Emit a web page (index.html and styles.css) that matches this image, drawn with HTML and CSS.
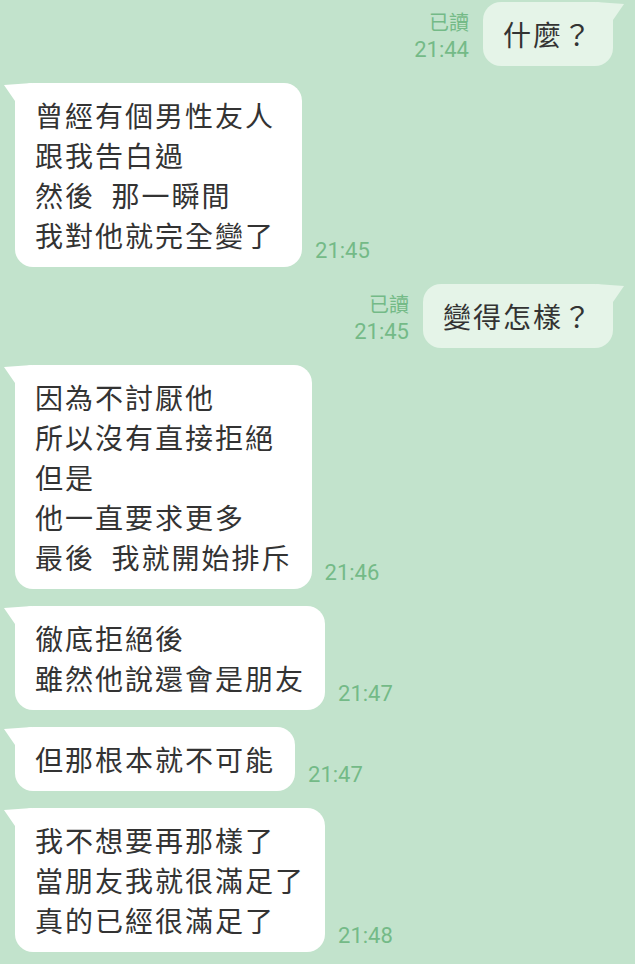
FILE: index.html
```html
<!DOCTYPE html>
<html lang="zh-Hant">
<head>
<meta charset="utf-8">
<title>Chat</title>
<link rel="stylesheet" href="styles.css">
</head>
<body>
<div class="chat">
  <div class="row sent">
    <div class="meta"><span class="read">已讀</span><span class="time">21:44</span></div>
    <div class="bubble">什麼？</div>
  </div>
  <div class="row recv">
    <div class="bubble wide">曾經有個男性友人<br>跟我告白過<br>然後  那一瞬間<br>我對他就完全變了</div>
    <span class="time">21:45</span>
  </div>
  <div class="row sent">
    <div class="meta"><span class="read">已讀</span><span class="time">21:45</span></div>
    <div class="bubble">變得怎樣？</div>
  </div>
  <div class="row recv">
    <div class="bubble">因為不討厭他<br>所以沒有直接拒絕<br>但是<br>他一直要求更多<br>最後  我就開始排斥</div>
    <span class="time">21:46</span>
  </div>
  <div class="row recv">
    <div class="bubble">徹底拒絕後<br>雖然他說還會是朋友</div>
    <span class="time">21:47</span>
  </div>
  <div class="row recv">
    <div class="bubble">但那根本就不可能</div>
    <span class="time">21:47</span>
  </div>
  <div class="row recv">
    <div class="bubble">我不想要再那樣了<br>當朋友我就很滿足了<br>真的已經很滿足了</div>
    <span class="time">21:48</span>
  </div>
</div>
</body>
</html>
```
FILE: styles.css
```css
html, body {
  margin: 0;
  padding: 0;
  background: #c2e3cc;
}

.chat {
  display: flex;
  flex-direction: column;
  gap: 17px;
  padding-top: 2px;
}

.row {
  display: flex;
  align-items: flex-end;
}

.row.sent {
  justify-content: flex-end;
  padding-right: 22px;
  gap: 14px;
}

.row.recv {
  justify-content: flex-start;
  padding-left: 15px;
  gap: 13px;
}

.bubble {
  position: relative;
  background: #ffffff;
  color: #333333;
  border-radius: 18px;
  padding: 12px 20px;
  font-family: "Noto Sans CJK TC", "Noto Sans CJK SC", sans-serif;
  font-size: 28px;
  line-height: 40px;
  letter-spacing: 2px;
  white-space: pre-wrap;
}

.bubble.wide {
  padding-right: 27px;
}

.sent .bubble {
  background: #e5f4e8;
}

.recv .bubble::before {
  content: "";
  position: absolute;
  left: -11px;
  top: 0;
  width: 28px;
  height: 18px;
  background: inherit;
  clip-path: polygon(0 2px, 100% 0, 100% 100%, 11px 100%);
}

.sent .bubble::before {
  content: "";
  position: absolute;
  right: -11px;
  top: 0;
  width: 28px;
  height: 18px;
  background: inherit;
  clip-path: polygon(100% 2px, 0 0, 0 100%, 17px 100%);
}

.meta {
  display: flex;
  flex-direction: column;
  align-items: flex-end;
  padding-bottom: 3px;
}

.read {
  font-family: "Noto Sans CJK TC", "Noto Sans CJK SC", sans-serif;
  font-size: 20px;
  line-height: 30px;
  color: #74ba87;
}

.time {
  font-family: Roboto, "Liberation Sans", sans-serif;
  font-size: 22px;
  line-height: 26px;
  color: #74ba87;
}

.recv .time {
  padding-bottom: 3px;
}
```
